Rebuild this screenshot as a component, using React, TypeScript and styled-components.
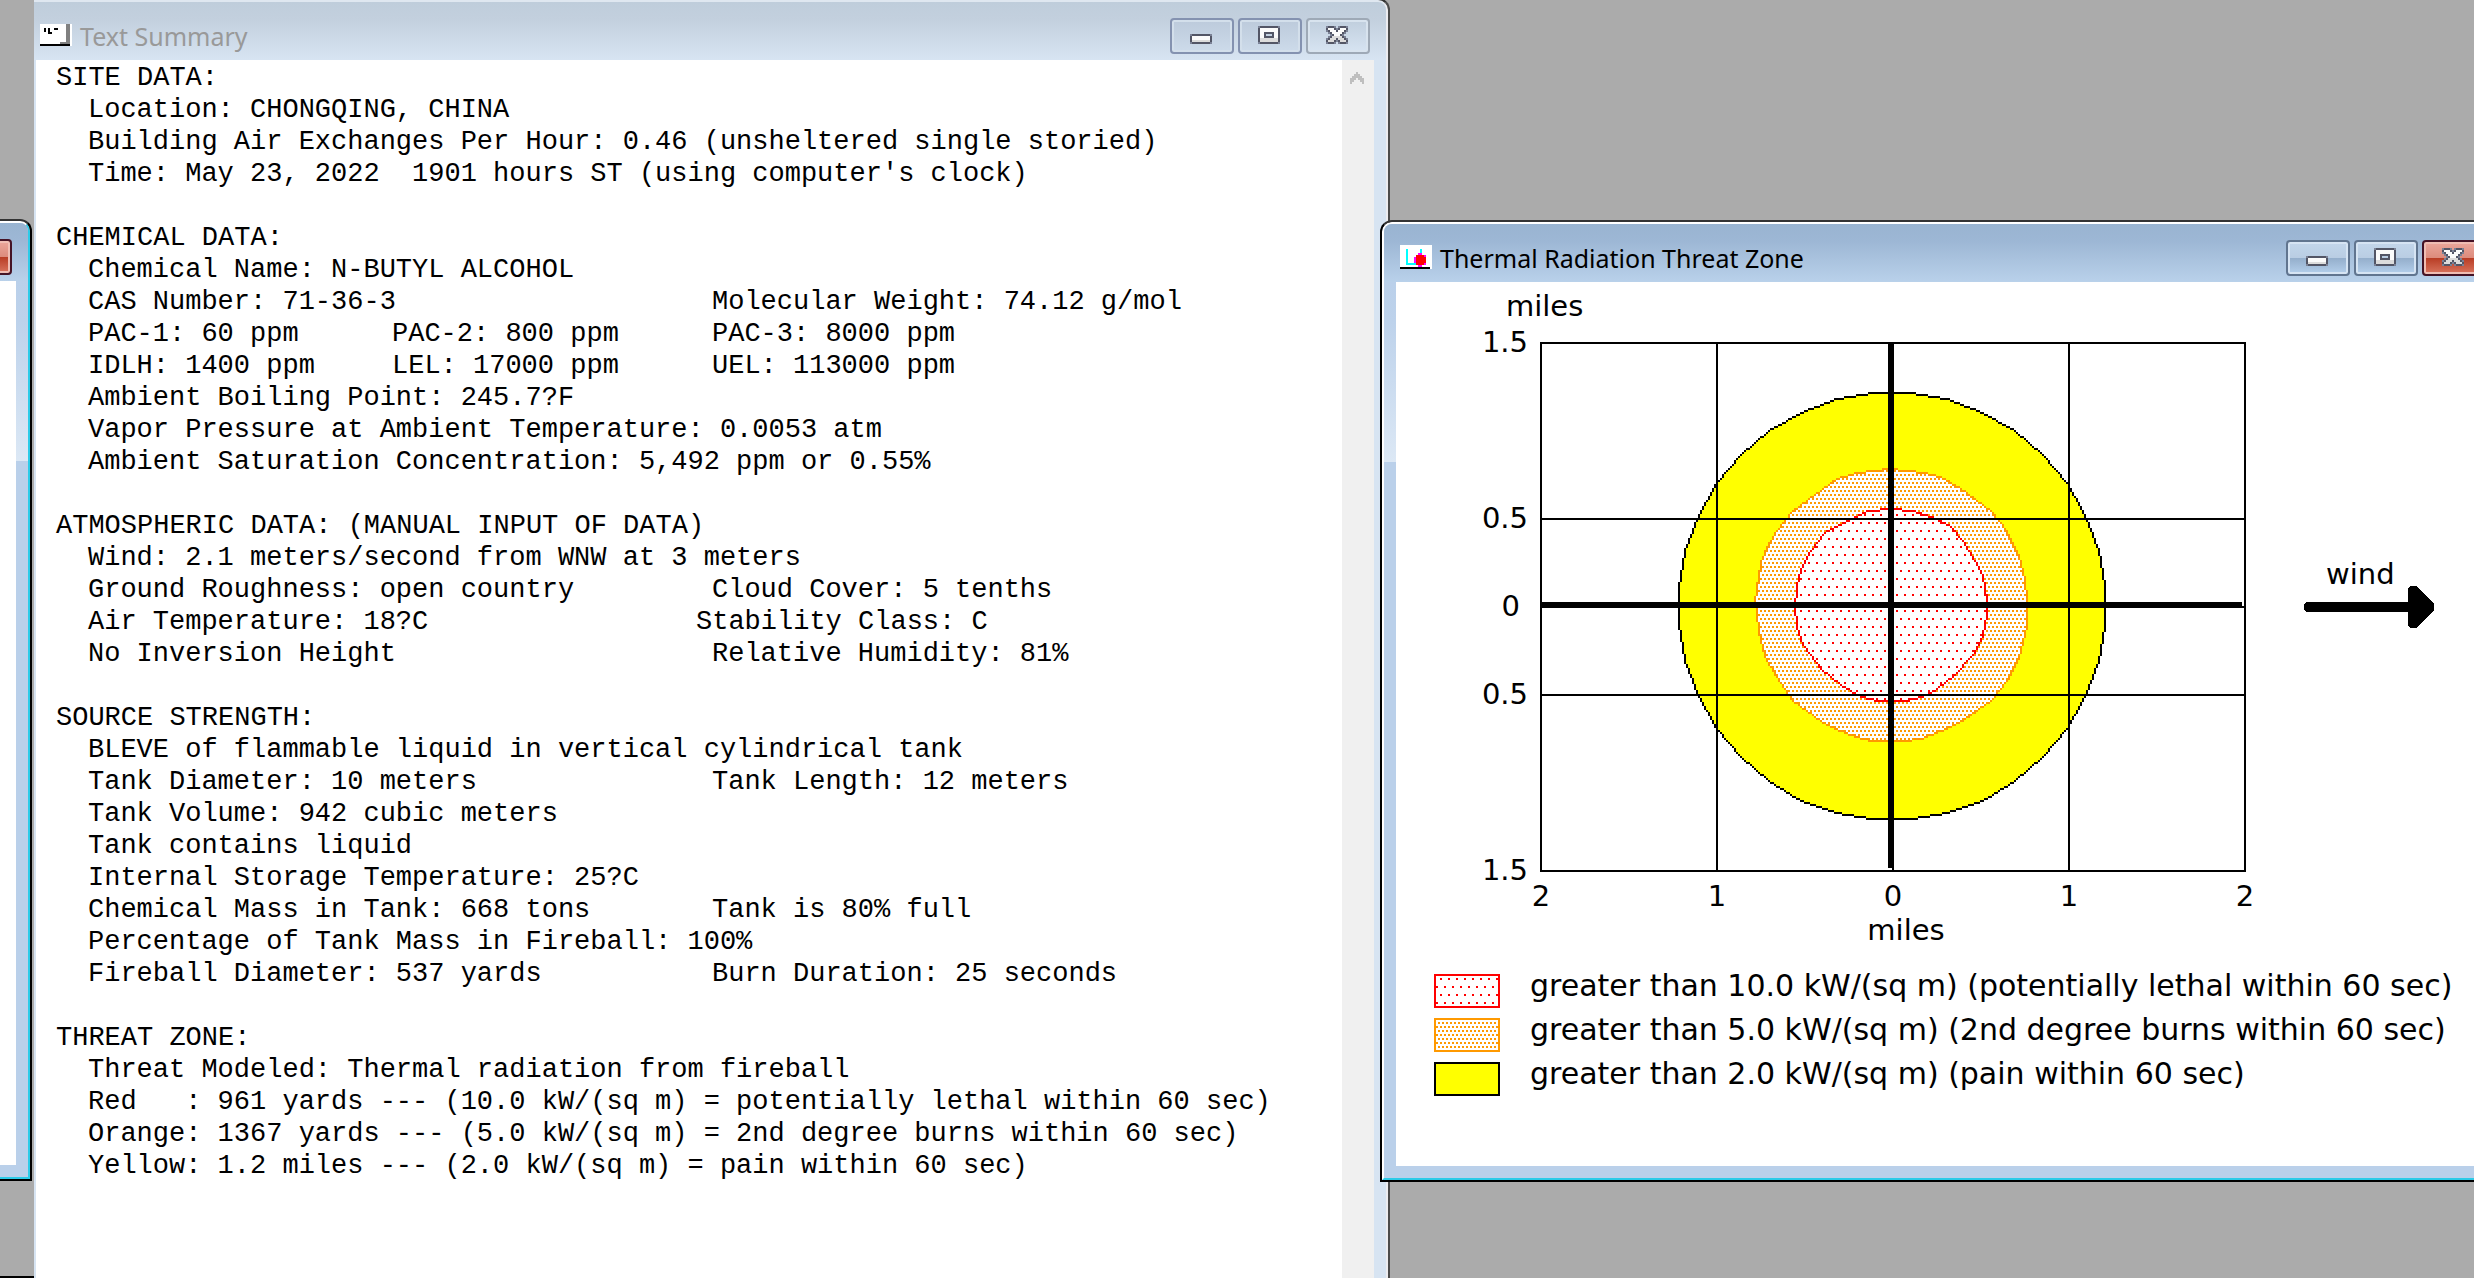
import React from 'react';
import styled, { createGlobalStyle, css } from 'styled-components';

const GlobalStyle = createGlobalStyle`
  *, *::before, *::after { box-sizing: border-box; }
  html, body { margin: 0; }
  body { overflow: hidden; background: #ababab; }
  h1, h2, p, figure, ul { margin: 0; padding: 0; font-weight: 400; }
`;

/* ---------- pixel artwork ---------- */

type Palette = Record<string, string>;

const runs = (rows: string[], key: string) =>
  rows
    .flatMap((row, y) => [...row].map((c, x) => (c === key ? `M${x} ${y}h1v1h-1z` : '')))
    .join('');

function Bitmap({ rows, palette }: { rows: string[]; palette: Palette }) {
  const w = rows[0].length;
  const h = rows.length;
  return (
    <svg width={w * 2} height={h * 2} viewBox={`0 0 ${w} ${h}`} shapeRendering="crispEdges" aria-hidden="true">
      {Object.entries(palette).map(([key, fill]) => (
        <path key={key} d={runs(rows, key)} fill={fill} />
      ))}
    </svg>
  );
}

const glyphPalette: Palette = { '#': '#535666', '+': '#7b8296', o: '#fbfbfb', '-': '#dcdcdc' };

const minimizeGlyph = [
  '...........',
  '...........',
  '...........',
  '...........',
  '+#########+',
  '#ooooooooo#',
  '#ooooooooo#',
  '#---------#',
  '+#########+',
];

const maximizeGlyph = [
  '+#########+',
  '#ooooooooo#',
  '#ooooooooo#',
  '#oo#####oo#',
  '#oo#...#oo#',
  '#oo#####oo#',
  '#---------#',
  '#---------#',
  '+#########+',
];

const closeGlyph = [
  '+###+.+###+',
  '#ooo#+#ooo#',
  '+#ooo#ooo#+',
  '.+#ooooo#+.',
  '..+#ooo#+..',
  '.+#-----#+.',
  '+#---#---#+',
  '#---#+#---#',
  '+###+.+###+',
];

const textIcon = [
  'wwwwwwwwwwwwwggw',
  'wwwwwwwwwwwwwggw',
  'wwbwbwwbbwwwwggw',
  'wwbwbwwwwwwwwggw',
  'wwwwbbwwwwwwwggw',
  'wwwwwwwwwwwwwggw',
  'wwwwwwwwwwwwwggw',
  'wwwwwwwwwwwwwggw',
  'wwwwwwwwwwwwwggw',
  'wwwwwwwwwwgggggw',
  'bbbbbbbbbbbbbbbw',
];

const zoneIcon = [
  'wwwwwwwwwwwwwwww',
  'wwwwwwwwwwwwwwww',
  'wwwcwwwwwwcwwwww',
  'wwwcwwwwwwcwwwww',
  'wwwcwwwwwmmwwwww',
  'wwwcwwwwrrrrmwww',
  'wwwcwwwmrrrrrwww',
  'wwwcwwwmrrrrrwww',
  'wwwcwwwmrrrrrwww',
  'wwwcccccrrrrmwww',
  'wwwwwwwwwmmwwwww',
  'bbbbbbbbbbbbbbbw',
];

const iconPalette: Palette = { w: '#fff', b: '#000', g: '#808080', c: '#00ffff', m: '#ff00ff', r: '#ff0000' };

/* ---------- window chrome ---------- */

const Desktop = styled.main`
  position: relative;
  height: 100vh;
  overflow: hidden;
  background: #ababab;
`;

const Placement = styled.div<{ $left: string; $right?: string; $width?: string; $top: string; $bottom?: string; $height?: string }>`
  position: absolute;
  display: flex;
  top: ${(p) => p.$top};
  left: ${(p) => p.$left};
  right: ${(p) => p.$right ?? 'auto'};
  bottom: ${(p) => p.$bottom ?? 'auto'};
  width: ${(p) => p.$width ?? 'auto'};
  height: ${(p) => p.$height ?? 'auto'};
`;

const Shell = styled.section<{ $active: boolean; $docked: boolean }>`
  flex: 1;
  min-width: 0;
  display: flex;
  border: 2px solid ${(p) => (p.$active ? '#000' : '#4b4b4b')};
  border-top-color: #333;
  border-left-width: ${(p) => (p.$docked ? 0 : 2)}px;
  border-radius: ${(p) => (p.$docked ? 0 : 12)}px 12px 0 0;
  overflow: hidden;
`;

const Rim = styled.div<{ $active: boolean; $docked: boolean }>`
  flex: 1;
  min-width: 0;
  display: flex;
  flex-direction: column;
  border: 2px solid;
  border-color: ${(p) => (p.$active ? '#fff #2ccbe8 #2ccbe8 #fff' : '#dfe7f0 #ececf0 #ececf0 #dfe7f0')};
  border-left-width: ${(p) => (p.$docked ? 0 : 2)}px;
  border-radius: ${(p) => (p.$docked ? 0 : 10)}px 10px 0 0;
  background: ${(p) => (p.$active ? '#bad0ea' : '#d7e4f2')};
`;

const TitleBar = styled.header<{ $active: boolean; $docked: boolean }>`
  flex: none;
  display: flex;
  align-items: center;
  gap: 8px;
  height: 58px;
  padding: 10px 16px 0 ${(p) => (p.$docked ? 6 : 16)}px;
  border-radius: ${(p) => (p.$docked ? 0 : 8)}px 8px 0 0;
  background: ${(p) =>
    p.$active ? 'linear-gradient(#99b4d1, #9db7d5 30%, #b9d1ea)' : 'linear-gradient(#bfcddb, #c3d0de 30%, #d7e4f2)'};
  svg { flex: none; display: block; }
`;

const TitleIcon = styled.span`
  flex: none;
  padding-bottom: 2px;
`;

const Title = styled.h1<{ $active: boolean }>`
  flex: 1;
  font: 400 25px/32px 'Noto Sans', sans-serif;
  color: ${(p) => (p.$active ? '#000' : '#999')};
  white-space: nowrap;
`;

const Controls = styled.div`
  display: flex;
  gap: 4px;
`;

const ControlButton = styled.button<{ $tone: 'idle' | 'idleClose' | 'active' | 'danger' }>`
  display: flex;
  align-items: center;
  justify-content: center;
  width: 64px;
  height: 36px;
  padding: 0 2px 2px 0;
  border: 2px solid;
  border-radius: 4px;
  ${(p) =>
    ({
      idle: css`
        border-color: #8492b0;
        background: linear-gradient(#bccadb, #cddbea);
        box-shadow: inset 0 0 0 2px #d3dfeb;
      `,
      idleClose: css`
        border-color: #9ea9b6;
        background: linear-gradient(#c0cedd, #d7e4f2);
        box-shadow: inset 0 0 0 2px #d8e3ee;
      `,
      active: css`
        border-color: #61758f;
        background: linear-gradient(#c3d6eb, #b9cde3 50%, #94aecb 50%, #b5d0ec);
        box-shadow: inset 0 0 0 2px #d6e4f3;
      `,
      danger: css`
        border-color: #451325;
        background: linear-gradient(#eba79c, #dc8b7c 50%, #b83c24 50%, #d9755f);
        box-shadow: inset 0 0 0 2px #efbdb3;
      `,
    })[p.$tone]}
`;

const Body = styled.div<{ $active: boolean; $docked: boolean }>`
  flex: 1;
  min-height: 0;
  display: flex;
  padding: 0 12px 12px ${(p) => (p.$docked ? 2 : 12)}px;
  ${(p) =>
    p.$active &&
    css`
      background: linear-gradient(#bad0ea, #bdd2eb 40px, #dce8f5 180px, #bad0ea 180px);
    `}
`;

const Client = styled.div`
  flex: 1;
  min-width: 0;
  display: flex;
  background: #fff;
`;

type WindowProps = {
  title?: string;
  icon?: React.ReactNode;
  active?: boolean;
  docked?: boolean;
  children?: React.ReactNode;
};

function Window({ title, icon, active = false, docked = false, children }: WindowProps) {
  return (
    <Shell $active={active} $docked={docked}>
      <Rim $active={active} $docked={docked}>
        <TitleBar $active={active} $docked={docked}>
          {icon && <TitleIcon>{icon}</TitleIcon>}
          <Title $active={active}>{title}</Title>
          <Controls>
            <ControlButton type="button" aria-label="Minimize" $tone={active ? 'active' : 'idle'}>
              <Bitmap rows={minimizeGlyph} palette={glyphPalette} />
            </ControlButton>
            <ControlButton type="button" aria-label="Maximize" $tone={active ? 'active' : 'idle'}>
              <Bitmap rows={maximizeGlyph} palette={glyphPalette} />
            </ControlButton>
            <ControlButton type="button" aria-label="Close" $tone={active ? 'danger' : 'idleClose'}>
              <Bitmap rows={closeGlyph} palette={glyphPalette} />
            </ControlButton>
          </Controls>
        </TitleBar>
        <Body $active={active} $docked={docked}>
          <Client>{children}</Client>
        </Body>
      </Rim>
    </Shell>
  );
}

/* ---------- text summary ---------- */

const Report = styled.div`
  flex: 1;
  min-width: 0;
  display: flex;
  flex-direction: column;
  gap: 32px;
  padding: 2px 0 0 20px;
  font: 400 27px/32px 'Liberation Mono', monospace;
  color: #000;
`;

const Heading = styled.h2`
  font: inherit;
  white-space: pre;
`;

const Line = styled.p<{ $columns?: string }>`
  display: grid;
  grid-template-columns: ${(p) => p.$columns ?? 'auto'};
  justify-content: start;
  padding-left: 32px;
  white-space: pre;
`;

const ScrollTrack = styled.div`
  flex: none;
  width: 32px;
  background: #f0f0f0;
`;

const ScrollButton = styled.button`
  display: flex;
  justify-content: center;
  width: 32px;
  height: 34px;
  padding: 12px 2px 0 0;
  border: 0;
  background: transparent;
`;

const arrowGlyph = ['...#...', '..###..', '.#####.', '###.###', '##...##', '#.....#'];

type ReportLine = string | { columns: string; cells: string[] };

const pair = (a: string, b: string): ReportLine => ({ columns: '624px auto', cells: [a, b] });
const triple = (a: string, b: string, c: string): ReportLine => ({ columns: '304px 320px auto', cells: [a, b, c] });

const sections: { heading: string; lines: ReportLine[] }[] = [
  {
    heading: 'SITE DATA:',
    lines: [
      'Location: CHONGQING, CHINA',
      'Building Air Exchanges Per Hour: 0.46 (unsheltered single storied)',
      "Time: May 23, 2022  1901 hours ST (using computer's clock)",
    ],
  },
  {
    heading: 'CHEMICAL DATA:',
    lines: [
      'Chemical Name: N-BUTYL ALCOHOL',
      pair('CAS Number: 71-36-3', 'Molecular Weight: 74.12 g/mol'),
      triple('PAC-1: 60 ppm', 'PAC-2: 800 ppm', 'PAC-3: 8000 ppm'),
      triple('IDLH: 1400 ppm', 'LEL: 17000 ppm', 'UEL: 113000 ppm'),
      'Ambient Boiling Point: 245.7?F',
      'Vapor Pressure at Ambient Temperature: 0.0053 atm',
      'Ambient Saturation Concentration: 5,492 ppm or 0.55%',
    ],
  },
  {
    heading: 'ATMOSPHERIC DATA: (MANUAL INPUT OF DATA)',
    lines: [
      'Wind: 2.1 meters/second from WNW at 3 meters',
      pair('Ground Roughness: open country', 'Cloud Cover: 5 tenths'),
      { columns: '608px auto', cells: ['Air Temperature: 18?C', 'Stability Class: C'] },
      pair('No Inversion Height', 'Relative Humidity: 81%'),
    ],
  },
  {
    heading: 'SOURCE STRENGTH:',
    lines: [
      'BLEVE of flammable liquid in vertical cylindrical tank',
      pair('Tank Diameter: 10 meters', 'Tank Length: 12 meters'),
      'Tank Volume: 942 cubic meters',
      'Tank contains liquid',
      'Internal Storage Temperature: 25?C',
      pair('Chemical Mass in Tank: 668 tons', 'Tank is 80% full'),
      'Percentage of Tank Mass in Fireball: 100%',
      pair('Fireball Diameter: 537 yards', 'Burn Duration: 25 seconds'),
    ],
  },
  {
    heading: 'THREAT ZONE:',
    lines: [
      'Threat Modeled: Thermal radiation from fireball',
      'Red   : 961 yards --- (10.0 kW/(sq m) = potentially lethal within 60 sec)',
      'Orange: 1367 yards --- (5.0 kW/(sq m) = 2nd degree burns within 60 sec)',
      'Yellow: 1.2 miles --- (2.0 kW/(sq m) = pain within 60 sec)',
    ],
  },
];

function TextSummary() {
  return (
    <>
      <Report>
        {sections.map((s) => (
          <section key={s.heading}>
            <Heading>{s.heading}</Heading>
            {s.lines.map((l) =>
              typeof l === 'string' ? (
                <Line key={l}>{l}</Line>
              ) : (
                <Line key={l.cells[0]} $columns={l.columns}>
                  {l.cells.map((c) => (
                    <span key={c}>{c}</span>
                  ))}
                </Line>
              ),
            )}
          </section>
        ))}
      </Report>
      <ScrollTrack>
        <ScrollButton type="button" aria-label="Scroll up">
          <Bitmap rows={arrowGlyph} palette={{ '#': '#bfbfbf' }} />
        </ScrollButton>
      </ScrollTrack>
    </>
  );
}

/* ---------- threat zone plot ---------- */

type Point = [number, number];

// Zone contours, six units to one plot cell.
const yellowRing: Point[] = Array.from({ length: 36 }, (_, i): Point => {
  const a = (i * Math.PI) / 18 + Math.PI / 36;
  return [696 + 642 * Math.cos(a), 679 + 642 * Math.sin(a)];
});
const orangeRing: Point[] = [
  [636, 274], [690, 266], [740, 272], [795, 278], [840, 292], [905, 325], [995, 390], [1040, 455], [1078, 530],
  [1095, 600], [1101, 665], [1098, 740], [1078, 830], [1040, 900], [995, 960], [915, 1015], [840, 1053],
  [780, 1076], [720, 1083], [640, 1083], [590, 1072], [540, 1053], [480, 1020], [400, 965], [350, 890],
  [315, 830], [297, 760], [291, 700], [285, 675], [290, 620], [300, 550], [318, 500], [350, 450], [400, 390],
  [465, 345], [530, 297], [590, 281],
];
const redRing: Point[] = [
  [620, 393], [690, 388], [760, 393], [815, 412], [865, 437], [910, 485], [965, 570], [974, 620], [983, 660],
  [983, 705], [970, 765], [940, 825], [880, 890], [815, 940], [765, 955], [735, 963], [655, 963], [600, 948],
  [545, 915], [480, 868], [430, 795], [411, 740], [405, 680], [411, 620], [425, 565], [450, 515], [495, 460],
  [560, 420],
];

const toCells = (ring: Point[]): Point[] => ring.map(([x, y]) => [Math.floor(60 + x / 6), Math.floor(19 + y / 6)]);

// Stepped one-cell outline through the ring's vertices.
function outline(cells: Point[]) {
  let d = '';
  cells.forEach(([x0, y0], i) => {
    const [x1, y1] = cells[(i + 1) % cells.length];
    const n = Math.max(Math.abs(x1 - x0), Math.abs(y1 - y0), 1);
    for (let k = 0; k < n; k++) {
      d += `M${Math.round(x0 + ((x1 - x0) * k) / n)} ${Math.round(y0 + ((y1 - y0) * k) / n)}h1v1h-1z`;
    }
  });
  return d;
}

function Zone({ ring, fill, stroke }: { ring: Point[]; fill: string; stroke: string }) {
  const cells = toCells(ring);
  const points = cells.map(([x, y]) => `${x + 0.5},${y + 0.5}`).join(' ');
  return (
    <g>
      <polygon points={points} fill="#fff" />
      <polygon points={points} fill={fill} />
      <path d={outline(cells)} fill={stroke} />
    </g>
  );
}

function Dots({ id, w, h, color, at }: { id: string; w: number; h: number; color: string; at: Point[] }) {
  return (
    <pattern id={id} width={w} height={h} patternUnits="userSpaceOnUse">
      {at.map(([x, y]) => (
        <rect key={`${x}-${y}`} x={x} y={y} width="1" height="1" fill={color} />
      ))}
    </pattern>
  );
}

const PlotArea = styled.div`
  grid-column: 2;
  grid-row: 2;
`;

function Plot() {
  return (
    <svg width="706" height="530" viewBox="0 0 353 265" shapeRendering="crispEdges" role="img" aria-label="Threat zone contours">
      <defs>
        <Dots id="plotRed" w={4} h={8} color="#f00" at={[[2, 6], [0, 2]]} />
        <Dots id="plotOrange" w={2} h={4} color="#f90" at={[[1, 0], [0, 2]]} />
      </defs>
      <Zone ring={yellowRing} fill="#ff0" stroke="#000" />
      <Zone ring={orangeRing} fill="url(#plotOrange)" stroke="#f90" />
      <Zone ring={redRing} fill="url(#plotRed)" stroke="#f00" />
      {[0, 88, 176, 264, 352].map((x) => (
        <rect key={x} x={x} y="0" width="1" height="265" />
      ))}
      {[0, 88, 132, 176, 264].map((y) => (
        <rect key={y} x="0" y={y} width="353" height="1" />
      ))}
      <rect x="174" y="0" width="3" height="263" />
      <rect x="0" y="130" width="351" height="3" />
    </svg>
  );
}

const ChartBody = styled.div`
  flex: 1;
  min-width: 0;
  display: flex;
  flex-direction: column;
  gap: 22px;
  padding: 6px 0 0 38px;
  font: 400 29px/36px 'DejaVu Sans', Verdana, sans-serif;
  color: #000;
`;

const Figure = styled.figure`
  display: grid;
  grid-template-columns: 94px 706px auto;
  grid-template-rows: 54px 530px auto auto;
  column-gap: 12px;
  justify-content: start;
  svg { display: block; }
`;

const YUnit = styled.p`
  grid-column: 1 / 3;
  grid-row: 1;
  padding-left: 72px;
`;

const YAxis = styled.div`
  grid-column: 1;
  grid-row: 2;
  display: grid;
  grid-template-rows: repeat(7, 88px);
  align-items: center;
  justify-items: end;
  margin: -44px 0 -42px;
`;

const YTick = styled.span<{ $row: number; $whole?: boolean }>`
  grid-row: ${(p) => p.$row};
  padding-right: ${(p) => (p.$whole ? 8 : 0)}px;
`;

const XAxis = styled.div`
  grid-column: 2;
  grid-row: 3;
  display: grid;
  grid-template-columns: repeat(5, 176px);
  justify-items: center;
  margin: 6px -87px 0;
`;

const XUnit = styled.p`
  grid-column: 2;
  grid-row: 4;
  padding-left: 26px;
  line-height: 32px;
  text-align: center;
`;

const Wind = styled.div`
  grid-column: 3;
  grid-row: 2;
  align-self: center;
  width: 130px;
  margin-left: 46px;
  padding-bottom: 24px;
  line-height: 24px;
`;

const WindLabel = styled.p`
  padding-left: 22px;
`;

const Legend = styled.ul`
  list-style: none;
  font-size: 30px;
`;

const LegendRow = styled.li`
  display: flex;
  align-items: flex-start;
  gap: 30px;
  height: 44px;
  white-space: nowrap;
  svg { flex: none; display: block; margin-top: 6px; }
`;

function Swatch({ stroke, fill, children }: { stroke: string; fill: string; children?: React.ReactNode }) {
  return (
    <svg width="66" height="34" viewBox="0 0 33 17" shapeRendering="crispEdges" aria-hidden="true">
      <defs>{children}</defs>
      <rect width="33" height="17" fill={stroke} />
      <rect x="1" y="1" width="31" height="15" fill="#fff" />
      <rect x="1" y="1" width="31" height="15" fill={fill} />
    </svg>
  );
}

function ThreatZone() {
  return (
    <ChartBody>
      <Figure>
        <YUnit>miles</YUnit>
        <YAxis>
          <YTick $row={1}>1.5</YTick>
          <YTick $row={3}>0.5</YTick>
          <YTick $row={4} $whole>0</YTick>
          <YTick $row={5}>0.5</YTick>
          <YTick $row={7}>1.5</YTick>
        </YAxis>
        <PlotArea>
          <Plot />
        </PlotArea>
        <XAxis>
          <span>2</span>
          <span>1</span>
          <span>0</span>
          <span>1</span>
          <span>2</span>
        </XAxis>
        <XUnit>miles</XUnit>
        <Wind>
          <WindLabel>wind</WindLabel>
          <svg width="130" height="42" viewBox="0 0 65 21" shapeRendering="crispEdges" aria-hidden="true">
            <path d="M1 8H52V1L53 0H56L65 9V12L56 21H53L52 20V13H1L0 12V9z" />
          </svg>
        </Wind>
      </Figure>
      <Legend>
        <LegendRow>
          <Swatch stroke="#f00" fill="url(#keyRed)">
            <Dots id="keyRed" w={4} h={8} color="#f00" at={[[3, 2], [1, 6]]} />
          </Swatch>
          <span>greater than 10.0 kW/(sq m) (potentially lethal within 60 sec)</span>
        </LegendRow>
        <LegendRow>
          <Swatch stroke="#f90" fill="url(#keyOrange)">
            <Dots id="keyOrange" w={2} h={4} color="#f90" at={[[0, 2], [1, 0]]} />
          </Swatch>
          <span>greater than 5.0 kW/(sq m) (2nd degree burns within 60 sec)</span>
        </LegendRow>
        <LegendRow>
          <Swatch stroke="#000" fill="#ff0" />
          <span>greater than 2.0 kW/(sq m) (pain within 60 sec)</span>
        </LegendRow>
      </Legend>
    </ChartBody>
  );
}

const BottomRule = styled.div`
  position: absolute;
  left: 0;
  bottom: 0;
  width: 34px;
  height: 2px;
  background: #000;
`;

export default function App() {
  return (
    <>
      <GlobalStyle />
      <Desktop>
        <BottomRule />
        <Placement $left="-468px" $width="500px" $top="219px" $height="962px">
          <Window active />
        </Placement>
        <Placement $left="34px" $width="1356px" $top="-2px" $bottom="-16px">
          <Window title="Text Summary" docked icon={<Bitmap rows={textIcon} palette={iconPalette} />}>
            <TextSummary />
          </Window>
        </Placement>
        <Placement $left="1380px" $right="-32px" $top="220px" $height="962px">
          <Window title="Thermal Radiation Threat Zone" active icon={<Bitmap rows={zoneIcon} palette={iconPalette} />}>
            <ThreatZone />
          </Window>
        </Placement>
      </Desktop>
    </>
  );
}
